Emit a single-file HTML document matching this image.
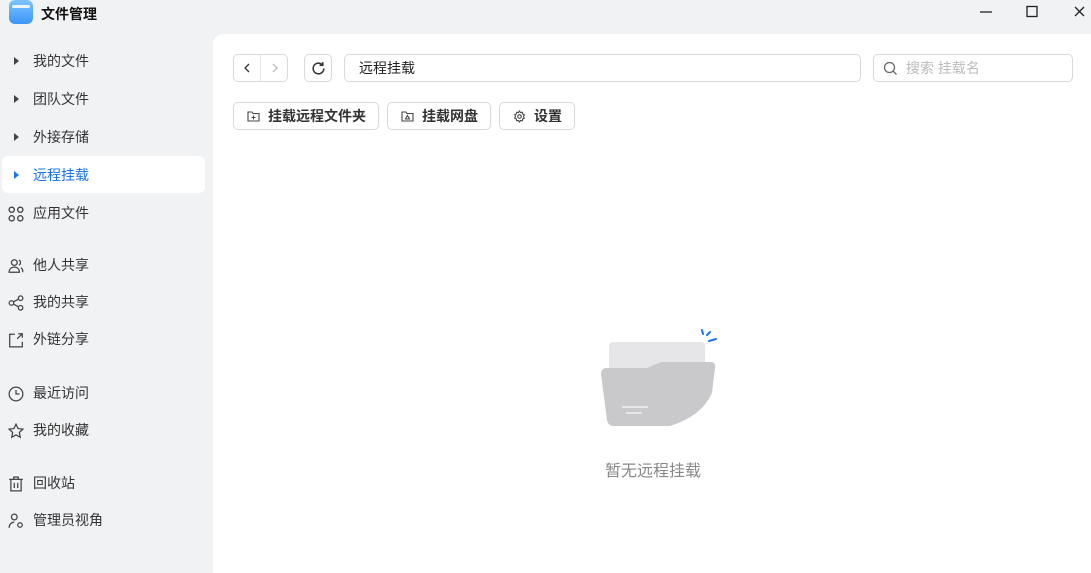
<!DOCTYPE html>
<html><head><meta charset="utf-8"><style>
*{margin:0;padding:0;box-sizing:border-box}
body{width:1091px;height:573px;background:#f1f2f4;font-family:"Liberation Sans","Noto Sans CJK SC",sans-serif;position:relative;overflow:hidden;color:#333}
.abs{position:absolute}
.title{left:41px;top:4px;font-size:14px;font-weight:bold;color:#111}
.logo{left:9px;top:0;width:24px;height:24px;border-radius:6px;background:linear-gradient(#7cc3ff,#3b95f5)}
.logo:after{content:"";position:absolute;left:3px;top:5px;width:18px;height:3px;background:#e8f4ff;border-radius:2px}
.nav{position:absolute;left:0;width:205px;height:37px;font-size:14px;color:#333;line-height:37px;padding-left:33px}
.nav .ic{position:absolute;left:8px;top:11px;width:16px;height:16px}
.tri{position:absolute;left:14px;top:14px;width:0;height:0;border-left:5px solid #444;border-top:4.5px solid transparent;border-bottom:4.5px solid transparent}
.active{background:#fff;border-radius:6px;color:#1a73e8;left:2px;width:203px;padding-left:31px}
.active .tri{border-left-color:#1a73e8;left:12px}
.main{left:213px;top:34px;width:878px;height:539px;background:#fff;border-top-left-radius:10px}
.box{position:absolute;border:1px solid #d9d9d9;border-radius:5px;background:#fff}
.btn{position:absolute;top:102px;height:28px;border:1px solid #d9d9d9;border-radius:5px;font-size:14px;font-weight:bold;color:#333;line-height:26px;padding-left:34px}
.btn svg{position:absolute;left:13px;top:7px}
</style></head><body>
<div class="abs logo"></div>
<div class="abs title">文件管理</div>
<svg class="abs" style="left:975px;top:4px" width="110" height="16"><path d="M5 8h12" stroke="#222" stroke-width="1.3"/><rect x="52" y="2.5" width="10" height="10" fill="none" stroke="#222" stroke-width="1.3"/><path d="M100 3l9 9M109 3l-9 9" stroke="#222" stroke-width="1.3"/></svg>

<div class="nav" style="top:43px"><span class="tri"></span>我的文件</div>
<div class="nav" style="top:81px"><span class="tri"></span>团队文件</div>
<div class="nav" style="top:119px"><span class="tri"></span>外接存储</div>
<div class="nav active" style="top:156px;height:37px;line-height:39px"><span class="tri" style="top:15px"></span>远程挂载</div>
<div class="nav" style="top:195px"><svg class="ic" viewBox="0 0 14 14" fill="none" stroke="#444" stroke-width="1.2"><rect x="1" y="1" width="4.5" height="4.5" rx="2.2"/><rect x="8.5" y="1" width="4.5" height="4.5" rx="2.2"/><rect x="1" y="8.5" width="4.5" height="4.5" rx="2.2"/><rect x="8.5" y="8.5" width="4.5" height="4.5" rx="2.2"/></svg>应用文件</div>
<div class="nav" style="top:247px"><svg class="ic" viewBox="0 0 14 14" fill="none" stroke="#444" stroke-width="1.1"><circle cx="5.5" cy="4" r="2.5"/><path d="M1 12.5c0-3 2-4.5 4.5-4.5s4.5 1.5 4.5 4.5zM9.5 1.8a2.4 2.4 0 010 4.4M11.5 8.5c1 .8 1.5 2 1.5 4"/></svg>他人共享</div>
<div class="nav" style="top:284px"><svg class="ic" viewBox="0 0 14 14" fill="none" stroke="#444" stroke-width="1.1"><circle cx="11" cy="2.8" r="2"/><circle cx="3" cy="7" r="2"/><circle cx="11" cy="11.2" r="2"/><path d="M4.8 6l4.4-2.3M4.8 8l4.4 2.3"/></svg>我的共享</div>
<div class="nav" style="top:321px"><svg class="ic" viewBox="0 0 14 14" fill="none" stroke="#444" stroke-width="1.1"><path d="M6 2H1.5v11h11V8.5M9 1.5h3.5V5M12.5 1.5L8 6"/></svg>外链分享</div>
<div class="nav" style="top:375px"><svg class="ic" viewBox="0 0 14 14" fill="none" stroke="#444" stroke-width="1.1"><circle cx="7" cy="7" r="6"/><path d="M7 3.5V7h3"/></svg>最近访问</div>
<div class="nav" style="top:412px"><svg class="ic" viewBox="0 0 14 14" fill="none" stroke="#444" stroke-width="1.1"><path d="M7 1l1.8 3.9 4.2.5-3.1 2.9.8 4.2L7 10.4l-3.7 2.1.8-4.2L1 5.4l4.2-.5z"/></svg>我的收藏</div>
<div class="nav" style="top:465px"><svg class="ic" viewBox="0 0 14 14" fill="none" stroke="#444" stroke-width="1.1"><path d="M1 3h12M5 3V1h4v2M2.5 3v10h9V3M5.5 6v4.5M8.5 6v4.5"/></svg>回收站</div>
<div class="nav" style="top:502px"><svg class="ic" viewBox="0 0 14 14" fill="none" stroke="#444" stroke-width="1.1"><circle cx="5.5" cy="3.5" r="2.5"/><path d="M1 13c0-3 2-5 4.5-5"/><circle cx="10.5" cy="10.5" r="2"/></svg>管理员视角</div>

<div class="abs main"></div>
<div class="box" style="left:233px;top:54px;width:55px;height:28px"><div class="abs" style="left:26px;top:0;width:1px;height:26px;background:#e3e3e3"></div><svg class="abs" style="left:0;top:0" width="54" height="26"><path d="M15 9l-4 4 4 4" stroke="#333" stroke-width="1.3" fill="none"/><path d="M39 9l4 4-4 4" stroke="#bbb" stroke-width="1.3" fill="none"/></svg></div>
<div class="box" style="left:304px;top:54px;width:28px;height:28px"><svg class="abs" style="left:6px;top:6px" width="15" height="15" viewBox="0 0 14 14" fill="none" stroke="#333" stroke-width="1.4"><path d="M12 7a5 5 0 11-1.5-3.6"/><path d="M11 1v3H8"/></svg></div>
<div class="box" style="left:344px;top:54px;width:517px;height:28px;font-size:14px;line-height:26px;padding-left:14px;color:#222">远程挂载</div>
<div class="box" style="left:873px;top:54px;width:200px;height:28px;font-size:14px;line-height:26px;padding-left:32px;color:#bbb"><svg class="abs" style="left:9px;top:6px" width="15" height="15" viewBox="0 0 15 15" fill="none" stroke="#666" stroke-width="1.3"><circle cx="6.5" cy="6.5" r="5"/><path d="M10.3 10.3l3.2 3.2"/></svg>搜索 挂载名</div>

<div class="btn" style="left:233px;width:146px"><svg width="13" height="13" viewBox="0 0 13 13" fill="none" stroke="#444" stroke-width="1.1"><path d="M1 2h4l1 1.5h6V11H1z"/><path d="M6.5 5.5v4M4.5 7.5h4"/></svg>挂载远程文件夹</div>
<div class="btn" style="left:387px;width:104px"><svg width="13" height="13" viewBox="0 0 13 13" fill="none" stroke="#444" stroke-width="1.1"><path d="M1 2h4l1 1.5h6V11H1z"/><path d="M4.5 9l2-3.5 2 3.5z"/></svg>挂载网盘</div>
<div class="btn" style="left:499px;width:76px"><svg width="13" height="13" viewBox="0 0 13 13" fill="none" stroke="#444" stroke-width="1.1"><path d="M6.5 1l1 1.5 1.8-.3.4 1.8 1.6.9-.8 1.6.8 1.6-1.6.9-.4 1.8-1.8-.3-1 1.5-1-1.5-1.8.3-.4-1.8-1.6-.9.8-1.6-.8-1.6 1.6-.9.4-1.8 1.8.3z"/><circle cx="6.5" cy="6.5" r="1.8"/></svg>设置</div>

<svg class="abs" style="left:598px;top:326px" width="125" height="105" viewBox="0 0 125 105">
<path d="M104 4l1 4M109 9l3-3M111 15l7-2" stroke="#1a73e8" stroke-width="2" stroke-linecap="round"/>
<rect x="11" y="16" width="96" height="60" rx="4" fill="#e6e6e8"/>
<path d="M3 48q0-6 6-6h40l14-6h50q5 0 4 6l-3 25Q104 90 72 100H16q-6 0-7-6z" fill="#c9c9cc"/>
<path d="M24 81h26M28 87h16" stroke="#e6e6e8" stroke-width="2"/>
</svg>
<div class="abs" style="left:605px;top:457px;font-size:16px;color:#888">暂无远程挂载</div>
</body></html>
